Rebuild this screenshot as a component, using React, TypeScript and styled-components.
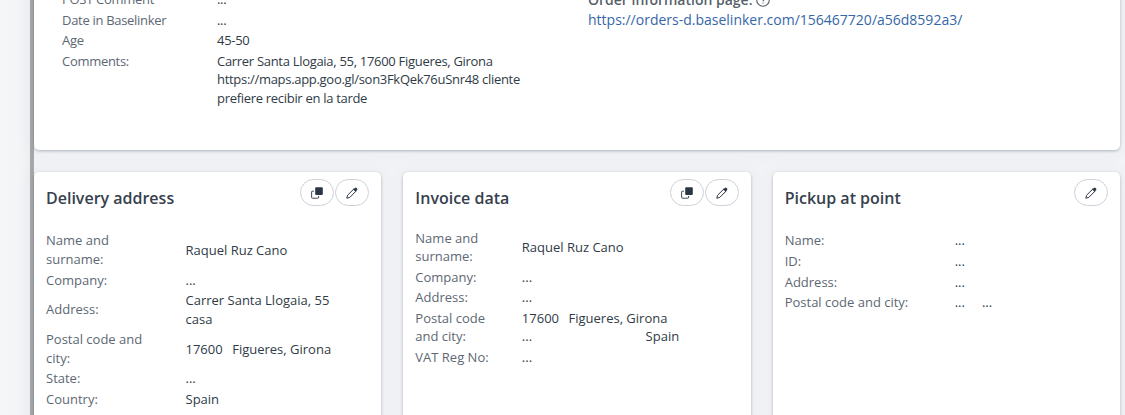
import React from "react";
import styled, { createGlobalStyle } from "styled-components";

const GlobalStyle = createGlobalStyle`
  * { box-sizing: border-box; }
  html, body { margin: 0; padding: 0; }
  body {
    font-family: "Open Sans", "Noto Sans", sans-serif;
    font-size: 13px;
    line-height: 18.57px;
    color: #303b47;
    background: #f1f3f6;
    overflow: hidden;
  }
`;

const Page = styled.div`
  display: flex;
  height: 415px;
  overflow: hidden;
`;

const Gutter = styled.div`
  flex: 0 0 34px;
  background: linear-gradient(90deg, #f5f6f8 0, #f4f5f7 60%, #edeff2 100%);
  border-right: 4px solid #a6a7a9;
`;

const Main = styled.main`
  flex: 1;
  min-width: 0;
  display: flex;
  flex-direction: column;
  gap: 22px;
  padding-right: 5px;
`;

const Card = styled.section`
  background: #fff;
  border-radius: 5px;
  box-shadow: 0 1px 3px rgba(50, 65, 80, 0.34), 0 0 20px rgba(70, 85, 105, 0.05);
`;

const SummaryCard = styled(Card)`
  flex: 0 0 170px;
  margin-top: -20px;
  padding: 9px 28px 0;
  display: grid;
  grid-template-columns: 526px 1fr;
`;

const SummaryFields = styled.div`
  letter-spacing: -0.3px;
`;

const AddressGrid = styled.div`
  flex: 1;
  display: grid;
  grid-template-columns: repeat(3, minmax(0, 1fr));
  gap: 22px;
`;

const AddressCard = styled(Card)`
  height: 290px;
  padding: 7px 12px;
`;

const CardHeader = styled.header`
  display: flex;
  justify-content: space-between;
  align-items: flex-start;
  height: 48px;
`;

const Title = styled.h3`
  margin: 8px 0 0;
  font-size: 16px;
  font-weight: 600;
  line-height: 22px;
  color: #36414d;
`;

const Actions = styled.div`
  display: flex;
  gap: 1px;
`;

const RoundButton = styled.button`
  display: flex;
  align-items: center;
  justify-content: center;
  width: 34px;
  height: 27px;
  padding: 0;
  border: 1px solid #cfd1d9;
  border-radius: 14px;
  background: #fff;
  color: #2b3644;
`;

const Fields = styled.div<{ $offset?: number }>`
  padding-top: ${(p) => p.$offset ?? 0}px;
`;

const Field = styled.div<{ $label: number; $top?: boolean }>`
  display: grid;
  grid-template-columns: ${(p) => p.$label}px 1fr;
  align-items: ${(p) => (p.$top ? "start" : "center")};
  padding: 1px 0;
`;

const Label = styled.span<{ $wrap?: number }>`
  max-width: ${(p) => (p.$wrap ? `${p.$wrap}px` : "none")};
  color: #5d6873;
`;

const Value = styled.div<{ $wrap?: number }>`
  max-width: ${(p) => (p.$wrap ? `${p.$wrap}px` : "none")};
`;

const Parts = styled.div<{ $gap: number }>`
  display: flex;
  gap: ${(p) => p.$gap}px;
`;

const InfoPage = styled.div`
  padding-top: 1px;
  font-size: 14px;
  line-height: 20px;
`;

const InfoTitle = styled.div`
  display: flex;
  align-items: center;
  gap: 4px;
  font-weight: 600;
  color: #56606a;
`;

const InfoLink = styled.a`
  color: #3567a8;
  text-decoration: none;
`;

const CopyIcon = () => (
  <svg width="12" height="12" viewBox="0 0 12 12">
    <rect x="4.200" y="0.300" width="7.600" height="7.600" rx="1" fill="currentColor" />
    <path d="M3 4.200H1.300a.7.7 0 0 0-.7.7v5.600c0 .4.3.7.7.7h5.600a.7.7 0 0 0 .7-.7V9" fill="none" stroke="currentColor" strokeWidth="0.9" />
  </svg>
);

const PencilIcon = () => (
  <svg width="12" height="12" viewBox="0 0 12 12">
    <path d="M.8 11.200l.8-3L8 1.800l2.200 2.200-6.400 6.400z" fill="none" stroke="currentColor" strokeWidth="1" strokeLinejoin="round" />
    <path d="M7.200 2.600L8.900.9a1.200 1.200 0 0 1 1.600 0l.6.6a1.200 1.200 0 0 1 0 1.600L9.400 4.800z" fill="currentColor" />
  </svg>
);

const HelpIcon = () => (
  <svg width="14" height="14" viewBox="0 0 14 14" fill="none" stroke="currentColor" strokeWidth="1.1">
    <circle cx="7" cy="7" r="6.300" />
    <path d="M5.200 5.500c0-2.400 3.600-2.300 3.600 0C8.800 6.900 7 6.800 7 8.300M7 9.400v1.200" />
  </svg>
);

const CopyButton = () => (
  <RoundButton aria-label="Copy"><CopyIcon /></RoundButton>
);

const EditButton = () => (
  <RoundButton aria-label="Edit"><PencilIcon /></RoundButton>
);

interface RowData {
  label: string;
  value: React.ReactNode;
}

const extras: RowData[] = [
  { label: "POST Comment", value: "..." },
  { label: "Date in Baselinker", value: "..." },
  { label: "Age", value: "45-50" },
  {
    label: "Comments:",
    value: "Carrer Santa Llogaia, 55, 17600 Figueres, Girona https://maps.app.goo.gl/son3FkQek76uSnr48 cliente prefiere recibir en la tarde",
  },
];

const delivery: RowData[] = [
  { label: "Name and surname:", value: "Raquel Ruz Cano" },
  { label: "Company:", value: "..." },
  { label: "Address:", value: <>Carrer Santa Llogaia, 55<br />casa</> },
  { label: "Postal code and city:", value: <Parts $gap={9.5}><span>17600</span><span>Figueres, Girona</span></Parts> },
  { label: "State:", value: "..." },
  { label: "Country:", value: "Spain" },
];

const invoice: RowData[] = [
  { label: "Name and surname:", value: "Raquel Ruz Cano" },
  { label: "Company:", value: "..." },
  { label: "Address:", value: "..." },
  {
    label: "Postal code and city:",
    value: (
      <>
        <Parts $gap={9.5}><span>17600</span><span>Figueres, Girona</span></Parts>
        <Parts $gap={113.500}><span>...</span><span>Spain</span></Parts>
      </>
    ),
  },
  { label: "VAT Reg No:", value: "..." },
];

const pickup: RowData[] = [
  { label: "Name:", value: "..." },
  { label: "ID:", value: "..." },
  { label: "Address:", value: "..." },
  { label: "Postal code and city:", value: <Parts $gap={17}><span>...</span><span>...</span></Parts> },
];

interface RowsProps {
  rows: RowData[];
  label: number;
  labelWrap?: number;
  valueWrap?: number;
  offset?: number;
  top?: boolean;
}

const Rows = ({ rows, label, labelWrap, valueWrap, offset, top }: RowsProps) => (
  <Fields $offset={offset}>
    {rows.map((row) => (
      <Field key={row.label} $label={label} $top={top}>
        <Label $wrap={labelWrap}>{row.label}</Label>
        <Value $wrap={valueWrap}>{row.value}</Value>
      </Field>
    ))}
  </Fields>
);

export default function App() {
  return (
    <>
      <GlobalStyle />
      <Page>
        <Gutter />
        <Main>
          <SummaryCard>
            <SummaryFields>
              <Rows rows={extras} label={155} valueWrap={310} top />
            </SummaryFields>
            <InfoPage>
              <InfoTitle>Order information page: <HelpIcon /></InfoTitle>
              <InfoLink>https://orders-d.baselinker.com/156467720/a56d8592a3/</InfoLink>
            </InfoPage>
          </SummaryCard>
          <AddressGrid>
            <AddressCard>
              <CardHeader>
                <Title>Delivery address</Title>
                <Actions><CopyButton /><EditButton /></Actions>
              </CardHeader>
              <Rows rows={delivery} label={139.5} labelWrap={105} offset={3.45} />
            </AddressCard>
            <AddressCard>
              <CardHeader>
                <Title>Invoice data</Title>
                <Actions><CopyButton /><EditButton /></Actions>
              </CardHeader>
              <Rows rows={invoice} label={106.5} labelWrap={82} offset={0.6} />
            </AddressCard>
            <AddressCard>
              <CardHeader>
                <Title>Pickup at point</Title>
                <Actions><EditButton /></Actions>
              </CardHeader>
              <Rows rows={pickup} label={170} offset={3.45} />
            </AddressCard>
          </AddressGrid>
        </Main>
      </Page>
    </>
  );
}
